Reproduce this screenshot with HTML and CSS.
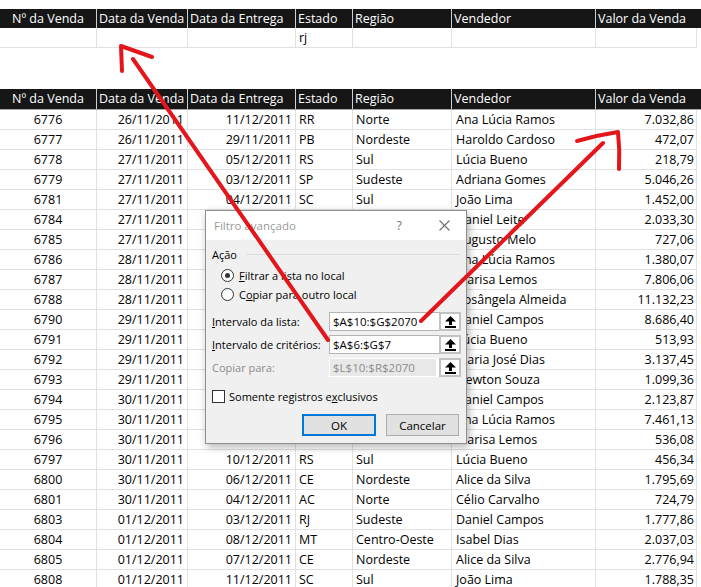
FILE: index.html
```html
<!DOCTYPE html>
<html lang="pt">
<head>
<meta charset="utf-8">
<title>Filtro avançado</title>
<link rel="stylesheet" href="styles.css">
</head>
<body>
<div class="sheet">
  <div class="row head head1">
    <div class="c ca">Nº da Venda</div><div class="c">Data da Venda</div><div class="c">Data da Entrega</div><div class="c">Estado</div><div class="c">Região</div><div class="c">Vendedor</div><div class="c">Valor da Venda</div>
  </div>
  <div class="row">
    <div class="c"></div><div class="c"></div><div class="c"></div><div class="c">rj</div><div class="c"></div><div class="c"></div><div class="c"></div>
  </div>
  <div class="gap"></div>
  <div class="row head head2">
    <div class="c ca">Nº da Venda</div><div class="c">Data da Venda</div><div class="c">Data da Entrega</div><div class="c">Estado</div><div class="c">Região</div><div class="c">Vendedor</div><div class="c">Valor da Venda</div>
  </div>
  <div class="row data"><div class="c">6776</div><div class="c">26/11/2011</div><div class="c">11/12/2011</div><div class="c">RR</div><div class="c">Norte</div><div class="c">Ana Lúcia Ramos</div><div class="c">7.032,86</div></div>
  <div class="row data"><div class="c">6777</div><div class="c">26/11/2011</div><div class="c">29/11/2011</div><div class="c">PB</div><div class="c">Nordeste</div><div class="c">Haroldo Cardoso</div><div class="c">472,07</div></div>
  <div class="row data"><div class="c">6778</div><div class="c">27/11/2011</div><div class="c">05/12/2011</div><div class="c">RS</div><div class="c">Sul</div><div class="c">Lúcia Bueno</div><div class="c">218,79</div></div>
  <div class="row data"><div class="c">6779</div><div class="c">27/11/2011</div><div class="c">03/12/2011</div><div class="c">SP</div><div class="c">Sudeste</div><div class="c">Adriana Gomes</div><div class="c">5.046,26</div></div>
  <div class="row data"><div class="c">6781</div><div class="c">27/11/2011</div><div class="c">04/12/2011</div><div class="c">SC</div><div class="c">Sul</div><div class="c">João Lima</div><div class="c">1.452,00</div></div>
  <div class="row data"><div class="c">6784</div><div class="c">27/11/2011</div><div class="c">02/12/2011</div><div class="c">MG</div><div class="c">Sudeste</div><div class="c">Daniel Leite</div><div class="c">2.033,30</div></div>
  <div class="row data"><div class="c">6785</div><div class="c">27/11/2011</div><div class="c">05/12/2011</div><div class="c">BA</div><div class="c">Nordeste</div><div class="c">Augusto Melo</div><div class="c">727,06</div></div>
  <div class="row data"><div class="c">6786</div><div class="c">28/11/2011</div><div class="c">08/12/2011</div><div class="c">AM</div><div class="c">Norte</div><div class="c">Ana Lúcia Ramos</div><div class="c">1.380,07</div></div>
  <div class="row data"><div class="c">6787</div><div class="c">28/11/2011</div><div class="c">01/12/2011</div><div class="c">PR</div><div class="c">Sul</div><div class="c">Marisa Lemos</div><div class="c">7.806,06</div></div>
  <div class="row data"><div class="c">6788</div><div class="c">28/11/2011</div><div class="c">06/12/2011</div><div class="c">SP</div><div class="c">Sudeste</div><div class="c">Rosângela Almeida</div><div class="c">11.132,23</div></div>
  <div class="row data"><div class="c">6790</div><div class="c">29/11/2011</div><div class="c">09/12/2011</div><div class="c">RJ</div><div class="c">Sudeste</div><div class="c">Daniel Campos</div><div class="c">8.686,40</div></div>
  <div class="row data"><div class="c">6791</div><div class="c">29/11/2011</div><div class="c">03/12/2011</div><div class="c">RS</div><div class="c">Sul</div><div class="c">Lúcia Bueno</div><div class="c">513,93</div></div>
  <div class="row data"><div class="c">6792</div><div class="c">29/11/2011</div><div class="c">07/12/2011</div><div class="c">GO</div><div class="c">Centro-Oeste</div><div class="c">Maria José Dias</div><div class="c">3.137,45</div></div>
  <div class="row data"><div class="c">6793</div><div class="c">29/11/2011</div><div class="c">04/12/2011</div><div class="c">PE</div><div class="c">Nordeste</div><div class="c">Newton Souza</div><div class="c">1.099,36</div></div>
  <div class="row data"><div class="c">6794</div><div class="c">30/11/2011</div><div class="c">02/12/2011</div><div class="c">RJ</div><div class="c">Sudeste</div><div class="c">Daniel Campos</div><div class="c">2.123,87</div></div>
  <div class="row data"><div class="c">6795</div><div class="c">30/11/2011</div><div class="c">10/12/2011</div><div class="c">PA</div><div class="c">Norte</div><div class="c">Ana Lúcia Ramos</div><div class="c">7.461,13</div></div>
  <div class="row data"><div class="c">6796</div><div class="c">30/11/2011</div><div class="c">05/12/2011</div><div class="c">SC</div><div class="c">Sul</div><div class="c">Marisa Lemos</div><div class="c">536,08</div></div>
  <div class="row data"><div class="c">6797</div><div class="c">30/11/2011</div><div class="c">10/12/2011</div><div class="c">RS</div><div class="c">Sul</div><div class="c">Lúcia Bueno</div><div class="c">456,34</div></div>
  <div class="row data"><div class="c">6800</div><div class="c">30/11/2011</div><div class="c">06/12/2011</div><div class="c">CE</div><div class="c">Nordeste</div><div class="c">Alice da Silva</div><div class="c">1.795,69</div></div>
  <div class="row data"><div class="c">6801</div><div class="c">30/11/2011</div><div class="c">04/12/2011</div><div class="c">AC</div><div class="c">Norte</div><div class="c">Célio Carvalho</div><div class="c">724,79</div></div>
  <div class="row data"><div class="c">6803</div><div class="c">01/12/2011</div><div class="c">03/12/2011</div><div class="c">RJ</div><div class="c">Sudeste</div><div class="c">Daniel Campos</div><div class="c">1.777,86</div></div>
  <div class="row data"><div class="c">6804</div><div class="c">01/12/2011</div><div class="c">08/12/2011</div><div class="c">MT</div><div class="c">Centro-Oeste</div><div class="c">Isabel Dias</div><div class="c">2.037,03</div></div>
  <div class="row data"><div class="c">6805</div><div class="c">01/12/2011</div><div class="c">07/12/2011</div><div class="c">CE</div><div class="c">Nordeste</div><div class="c">Alice da Silva</div><div class="c">2.776,94</div></div>
  <div class="row data"><div class="c">6808</div><div class="c">01/12/2011</div><div class="c">11/12/2011</div><div class="c">SC</div><div class="c">Sul</div><div class="c">João Lima</div><div class="c">1.788,35</div></div>
</div>

<div class="dialog">
  <div class="titlebar">
    <span class="title">Filtro avançado</span>
    <span class="help">?</span>
    <svg class="close" width="11" height="11" viewBox="0 0 11 11"><path d="M0.5 0.5 L10.5 10.5 M10.5 0.5 L0.5 10.5" stroke="#6d6d6d" stroke-width="1.1" fill="none"/></svg>
  </div>
  <div class="body">
    <div class="legend"><span>Ação</span><span class="rule"></span></div>
    <div class="radio-row"><span class="radio on"></span><span><u>F</u>iltrar a lista no local</span></div>
    <div class="radio-row"><span class="radio"></span><span>C<u>o</u>piar para outro local</span></div>
    <div class="field">
      <span class="lbl"><u>I</u>ntervalo da lista:</span>
      <span class="inp">$A$10:$G$2070</span>
      <span class="pick"><svg width="11" height="12" viewBox="0 0 11 12"><path d="M5.5 0 L11 5.5 L7 5.5 L7 9 L4 9 L4 5.5 L0 5.5 Z" fill="#000"/><rect x="0" y="10" width="11" height="2" fill="#000"/></svg></span>
    </div>
    <div class="field">
      <span class="lbl"><u>I</u>ntervalo de critérios:</span>
      <span class="inp">$A$6:$G$7</span>
      <span class="pick"><svg width="11" height="12" viewBox="0 0 11 12"><path d="M5.5 0 L11 5.5 L7 5.5 L7 9 L4 9 L4 5.5 L0 5.5 Z" fill="#000"/><rect x="0" y="10" width="11" height="2" fill="#000"/></svg></span>
    </div>
    <div class="field disabled">
      <span class="lbl">Copiar para:</span>
      <span class="inp">$L$10:$R$2070</span>
      <span class="pick"><svg width="11" height="12" viewBox="0 0 11 12"><path d="M5.5 0 L11 5.5 L7 5.5 L7 9 L4 9 L4 5.5 L0 5.5 Z" fill="#000"/><rect x="0" y="10" width="11" height="2" fill="#000"/></svg></span>
    </div>
    <div class="check-row"><span class="box"></span><span>Somente registros e<u>x</u>clusivos</span></div>
    <div class="buttons">
      <span class="btn default">OK</span>
      <span class="btn">Cancelar</span>
    </div>
  </div>
</div>

<svg class="marks" width="701" height="587" viewBox="0 0 701 587">
  <g stroke="#e3161c" stroke-width="4" stroke-linecap="round" stroke-linejoin="round" fill="none">
    <path d="M133 59 L328 340"/>
    <path d="M122 71 L121 46 L152 57"/>
    <path d="M421 321 L603 143"/>
    <path d="M577 141 Q598 135 618 132 Q620 150 619 169"/>
  </g>
</svg>
</body>
</html>
```

FILE: styles.css
```css
html, body {
  margin: 0;
  padding: 0;
  background: #fff;
}
body {
  width: 701px;
  height: 587px;
  overflow: hidden;
  position: relative;
  font-family: "Open Sans", "Noto Sans", sans-serif;
}
.sheet {
  padding-top: 9px;
  font-size: 12.5px;
  color: #000;
}
.row {
  display: grid;
  grid-template-columns: 97px 91px 108px 57px 99px 144px 101px;
  height: 20px;
}
.c {
  box-sizing: border-box;
  border-right: 1px solid #e1e1e1;
  border-bottom: 1px solid #e1e1e1;
  padding: 0 3px;
  line-height: 19px;
  white-space: nowrap;
  overflow: hidden;
}
.head {
  background: #161616;
  color: #fff;
}
.head .c {
  border-bottom: none;
  border-right: 1px solid #cfcfcf;
  line-height: 20px;
  padding: 0 2px;
}
.head .c:last-child {
  border-right: none;
}
.head .ca {
  text-align: center;
}
.head1 {
  height: 19px;
}
.head1 .c {
  line-height: 19px;
}
.gap {
  height: 41px;
}
.head2 {
  height: 21px;
  border-bottom: 1px solid #a8a8a8;
  box-sizing: border-box;
}
.data .c:nth-child(1) { text-align: center; }
.data .c:nth-child(2),
.data .c:nth-child(3) { text-align: right; padding-right: 3px; }
.data .c:nth-child(7) { text-align: right; padding-right: 2px; }
.data .c:nth-child(6) { padding-left: 4px; }

/* dialog */
.dialog {
  position: absolute;
  left: 205px;
  top: 210px;
  width: 262px;
  height: 234px;
  box-sizing: border-box;
  background: #f0f0f0;
  border: 1px solid #8f8f8f;
  box-shadow: 2px 3px 8px rgba(0, 0, 0, 0.3);
  font-size: 11px;
  color: #000;
}
.titlebar {
  height: 29px;
  background: #fff;
  display: flex;
  align-items: center;
  padding-left: 8px;
  color: #9a9a9a;
  font-size: 11.5px;
}
.title {
  flex: 1;
}
.help {
  color: #777;
  font-size: 12.5px;
  margin-right: 37px;
}
.close {
  margin-right: 16px;
}
.body {
  padding: 6px 6px 0 6px;
}
.legend {
  display: flex;
  align-items: center;
  height: 16px;
}
.rule {
  flex: 1;
  height: 1px;
  background: #dcdcdc;
  margin-left: 9px;
  margin-right: 0;
}
.radio-row {
  display: flex;
  align-items: center;
  height: 19px;
  padding-left: 9px;
  gap: 5px;
}
.legend + .radio-row {
  margin-top: 4px;
}
.radio {
  width: 11px;
  height: 11px;
  border: 1px solid #333;
  border-radius: 50%;
  background: #fff;
  position: relative;
}
.radio.on::after {
  content: "";
  position: absolute;
  left: 3px;
  top: 3px;
  width: 5px;
  height: 5px;
  border-radius: 50%;
  background: #333;
}
.field {
  display: grid;
  grid-template-columns: 117px 110px 22px;
  height: 19px;
  align-items: center;
  margin-bottom: 4px;
}
.radio-row + .field {
  margin-top: 8px;
}
.inp {
  box-sizing: border-box;
  height: 19px;
  line-height: 17px;
  border: 1px solid #b4b4b4;
  border-right: none;
  background: #fff;
  padding-left: 3px;
  font-size: 11.5px;
}
.pick {
  box-sizing: border-box;
  height: 19px;
  border: 2px solid #c2c2c2;
  background: #fff;
  display: flex;
  align-items: center;
  justify-content: center;
}
.disabled .lbl {
  color: #8c8c8c;
}
.disabled .inp {
  color: #8c8c8c;
  background: #e8e8e8;
  border-color: #fff;
  border-width: 1px 3px 1px 1px;
  border-style: solid;
}
.check-row {
  display: flex;
  align-items: center;
  gap: 4px;
  height: 14px;
  margin-top: 12px;
}
.box {
  width: 11px;
  height: 11px;
  border: 1px solid #333;
  background: #fff;
}
.buttons {
  display: flex;
  justify-content: flex-end;
  gap: 10px;
  margin-top: 11px;
  padding-right: 1px;
}
.btn {
  box-sizing: border-box;
  width: 73px;
  height: 22px;
  background: #e1e1e1;
  border: 1px solid #adadad;
  display: flex;
  align-items: center;
  justify-content: center;
  font-size: 11.5px;
}
.btn.default {
  width: 74px;
  border: 2px solid #0078d7;
}
.marks {
  position: absolute;
  left: 0;
  top: 0;
  pointer-events: none;
}
```
